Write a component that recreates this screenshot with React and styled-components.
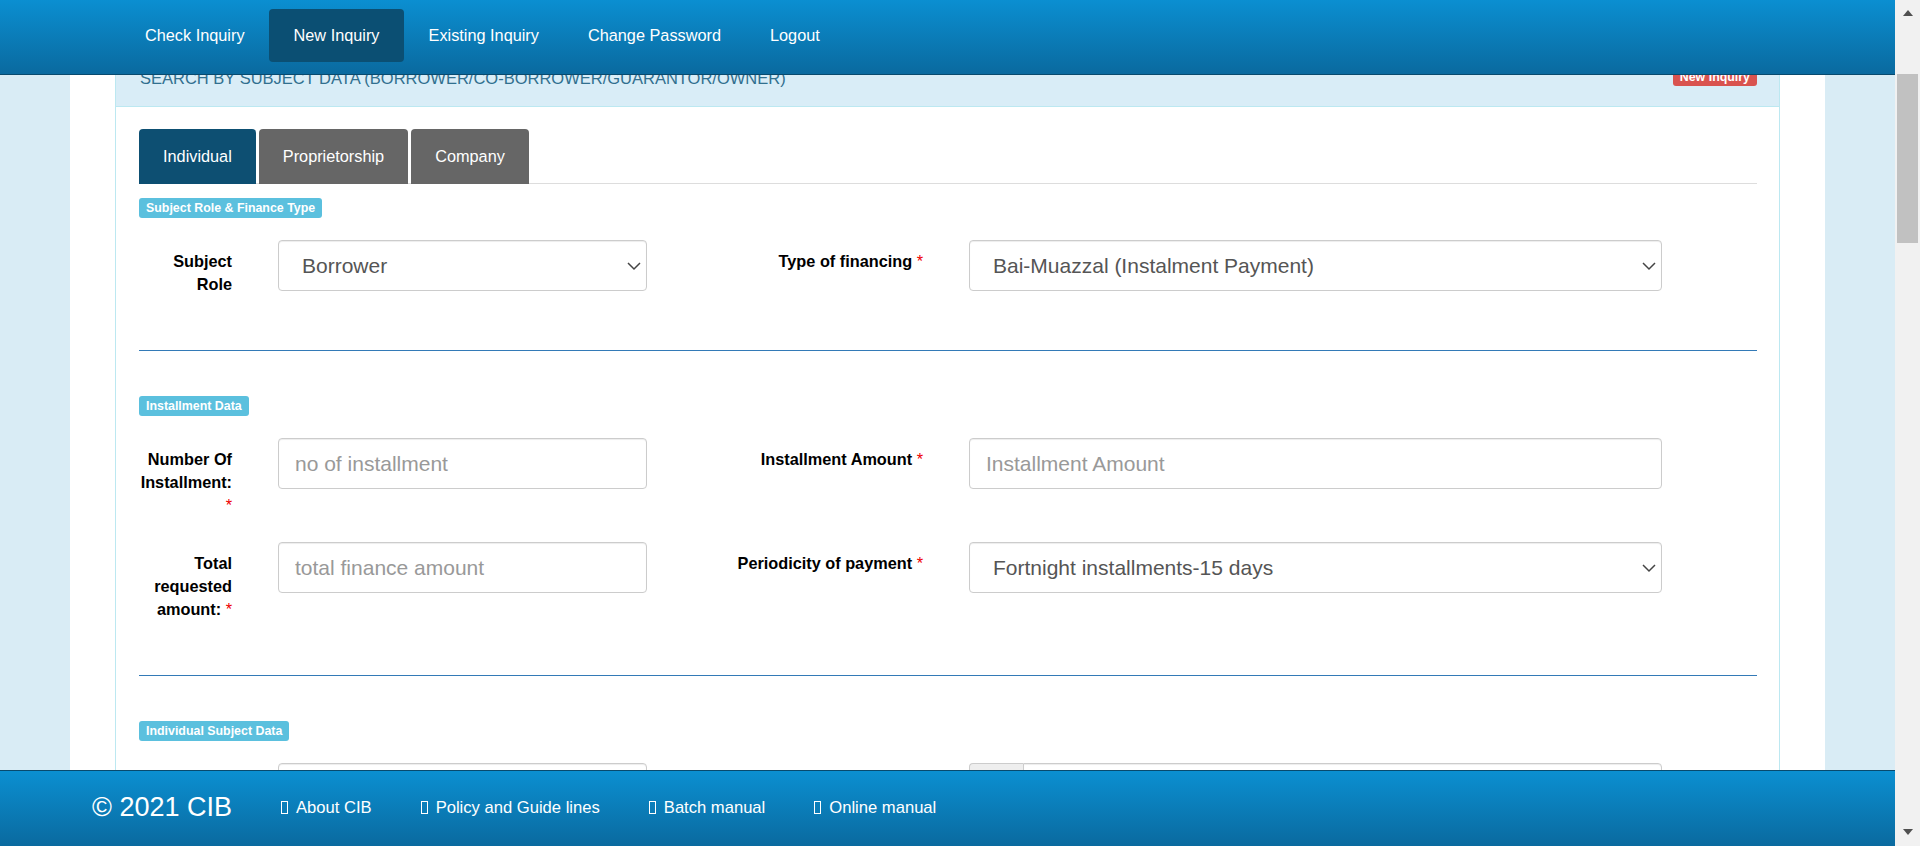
import React, { useEffect } from 'react';
import styled, { createGlobalStyle } from 'styled-components';
import { Calendar } from 'lucide-react';

//** GLOBAL **//

const GlobalStyle = createGlobalStyle`
  html {
    scrollbar-width: none;
  }
  html, body {
    margin: 0;
    padding: 0;
  }
  body {
    padding-right: 25px;
    background: #d9ecf5;
    font-family: "Liberation Sans", Arial, sans-serif;
    font-size: 16px;
    color: #333;
  }
  ::-webkit-scrollbar {
    display: none;
  }
`;

//** NAVBAR **//

const NavBar = styled.nav`
  position: fixed;
  top: 0;
  left: 0;
  right: 25px;
  z-index: 10;
  height: 75px;
  box-sizing: border-box;
  display: flex;
  align-items: flex-start;
  padding: 9px 0 0 120.5px;
  background: linear-gradient(to bottom, #0b8fd1 0%, #0a6a9f 100%);
  border-bottom: 1px solid #084a6e;
`;

const NavLink = styled.a`
  display: block;
  height: 53px;
  line-height: 53px;
  padding: 0 24.5px;
  border-radius: 4px;
  color: #fff;
  font-size: 16.3px;
  text-decoration: none;
  background: ${p => (p.$active ? '#0b4f73' : 'transparent')};
`;

//** FAKE WINDOW SCROLLBAR **//

const ScrollTrack = styled.div`
  position: fixed;
  top: 0;
  right: 0;
  bottom: 0;
  z-index: 20;
  width: 25px;
  display: flex;
  flex-direction: column;
  align-items: center;
  background: #f1f1f1;
`;

const ScrollArrow = styled.span`
  width: 0;
  height: 0;
  border-left: 5px solid transparent;
  border-right: 5px solid transparent;
  ${p =>
    p.$down
      ? 'border-top: 6px solid #505050; margin: auto 0 11px;'
      : 'border-bottom: 6px solid #505050; margin-top: 10px;'}
`;

const ScrollThumb = styled.span`
  width: 21px;
  height: 169px;
  margin-top: 58px;
  background: #c1c1c1;
`;

//** PAGE **//

const Container = styled.main`
  width: 1755px;
  min-height: 3990px;
  box-sizing: border-box;
  margin: 0 auto;
  padding: 300px 45px 0;
  background: #fff;
`;

const Panel = styled.section`
  border: 1px solid #bce8f1;
  border-radius: 4px;
`;

const PanelHeading = styled.div`
  display: flex;
  justify-content: space-between;
  align-items: flex-start;
  padding: 17px 22px 18px 24px;
  line-height: 20px;
  background: #d9edf7;
  border-bottom: 1px solid #bce8f1;
  color: #31708f;
  font-size: 16.5px;
  text-transform: uppercase;
`;

const PanelBody = styled.div`
  padding: 22px 22px 0 23px;
`;

const Label = styled.span`
  display: inline-block;
  height: ${p => (p.$big ? 18 : 20)}px;
  line-height: ${p => (p.$big ? 18 : 20)}px;
  padding: 0 7px;
  border-radius: 3px;
  color: #fff;
  font-size: 12.4px;
  font-weight: bold;
  text-transform: none;
  background: ${p => p.$color};
`;

//** TABS **//

const TabBar = styled.div`
  display: flex;
  border-bottom: 1px solid #ddd;
`;

const Tab = styled.div`
  height: 55px;
  display: flex;
  align-items: center;
  padding: 0 24px;
  margin-right: 3px;
  margin-bottom: -1px;
  border-radius: 4px 4px 0 0;
  color: #fff;
  font-size: 16.3px;
  background: ${p => (p.$active ? '#0d4f72' : '#666')};
`;

//** FORM **//

const Section = styled.div`
  padding: ${p => (p.$first ? 14 : 45)}px 0 29px;
`;

const Divider = styled.hr`
  margin: 0;
  border: 0;
  border-top: 1px solid #337ab7;
`;

const FormRow = styled.div`
  display: flex;
  align-items: flex-start;
  margin-top: ${p => (p.$first ? 22 : 0)}px;
  margin-bottom: 25px;
`;

const FieldLabel = styled.label`
  width: ${p => p.$width}px;
  flex: none;
  margin-right: 46px;
  padding-top: 10px;
  line-height: 23px;
  text-align: right;
  font-weight: bold;
  font-size: 16.3px;
  color: #000;
`;

const Req = styled.span`
  color: #e00;
  font-weight: normal;
`;

const fieldBase = `
  height: 51px;
  box-sizing: border-box;
  border: 1px solid #ccc;
  border-radius: 4px;
  box-shadow: inset 0 1px 1px rgba(0, 0, 0, 0.075);
  background-color: #fff;
  font-family: "Liberation Sans", Arial, sans-serif;
  font-size: 21px;
  color: #555;
  outline: none;
`;

const TextInput = styled.input`
  ${fieldBase}
  flex: none;
  width: ${p => p.$width}px;
  padding: 0 16px;
  &::placeholder {
    color: #999;
  }
`;

const SelectWrap = styled.div`
  position: relative;
  flex: none;
  width: ${p => p.$width}px;
`;

const Select = styled.select`
  ${fieldBase}
  width: 100%;
  padding: 0 30px 0 23px;
  appearance: none;
`;

const Chevron = styled.svg`
  position: absolute;
  right: 6px;
  top: 50%;
  transform: translateY(-50%);
  pointer-events: none;
`;

const InputGroup = styled.div`
  display: flex;
  width: ${p => p.$width}px;
  flex: none;
`;

const Addon = styled.span`
  width: 54px;
  height: 51px;
  box-sizing: border-box;
  display: flex;
  align-items: center;
  justify-content: center;
  border: 1px solid #ccc;
  border-right: 0;
  border-radius: 4px 0 0 4px;
  background: #eee;
  color: #555;
`;

const GroupInput = styled(TextInput)`
  flex: 1;
  border-radius: 0 4px 4px 0;
`;

//** FOOTER **//

const Footer = styled.footer`
  position: fixed;
  left: 0;
  right: 25px;
  bottom: 0;
  z-index: 10;
  height: 76px;
  box-sizing: border-box;
  display: flex;
  align-items: center;
  gap: 49px;
  padding: 0 0 2px 92px;
  background: linear-gradient(to bottom, #0b8fd1 0%, #0a6a9f 100%);
  border-top: 1px solid #084a6e;
  color: #fff;
`;

const Copyright = styled.span`
  font-size: 27px;
`;

const FooterLink = styled.a`
  display: flex;
  align-items: center;
  color: #fff;
  font-size: 16.6px;
  text-decoration: none;
`;

const MissingGlyph = styled.span`
  width: 7px;
  height: 13px;
  box-sizing: border-box;
  margin-right: 8px;
  border: 1px solid #fff;
`;

function DropDown({ width, value, options }) {
  return (
    <SelectWrap $width={width}>
      <Select defaultValue={value}>
        {options.map(o => (
          <option key={o}>{o}</option>
        ))}
      </Select>
      <Chevron width="14" height="9" viewBox="0 0 14 9">
        <polyline points="1,1.5 7,7.5 13,1.5" fill="none" stroke="#444" strokeWidth="1.5" />
      </Chevron>
    </SelectWrap>
  );
}

const navItems = ['Check Inquiry', 'New Inquiry', 'Existing Inquiry', 'Change Password', 'Logout'];
const footerLinks = ['About CIB', 'Policy and Guide lines', 'Batch manual', 'Online manual'];

export default function App() {
  useEffect(() => {
    window.scrollTo(0, 250);
  }, []);

  return (
    <>
      <GlobalStyle />
      <NavBar>
        {navItems.map(item => (
          <NavLink key={item} href="#" $active={item === 'New Inquiry'}>
            {item}
          </NavLink>
        ))}
      </NavBar>

      <Container>
        <Panel>
          <PanelHeading>
            <span>Search by subject data (Borrower/Co-Borrower/Guarantor/Owner)</span>
            <Label $big $color="#d9534f">New Inquiry</Label>
          </PanelHeading>
          <PanelBody>
            <TabBar>
              <Tab $active>Individual</Tab>
              <Tab>Proprietorship</Tab>
              <Tab>Company</Tab>
            </TabBar>

            <Section $first>
              <Label $color="#5bc0de">Subject Role &amp; Finance Type</Label>
              <FormRow $first>
                <FieldLabel $width={93}>Subject Role</FieldLabel>
                <DropDown
                  width={369}
                  value="Borrower"
                  options={['Borrower', 'Co-Borrower', 'Guarantor', 'Owner']}
                />
                <FieldLabel $width={276}>
                  Type of financing <Req>*</Req>
                </FieldLabel>
                <DropDown
                  width={693}
                  value="Bai-Muazzal (Instalment Payment)"
                  options={['Bai-Muazzal (Instalment Payment)', 'Murabaha', 'Ijara']}
                />
              </FormRow>
            </Section>
            <Divider />

            <Section>
              <Label $color="#5bc0de">Installment Data</Label>
              <FormRow $first>
                <FieldLabel $width={93}>
                  Number Of Installment: <Req>*</Req>
                </FieldLabel>
                <TextInput $width={369} placeholder="no of installment" />
                <FieldLabel $width={276}>
                  Installment Amount <Req>*</Req>
                </FieldLabel>
                <TextInput $width={693} placeholder="Installment Amount" />
              </FormRow>
              <FormRow>
                <FieldLabel $width={93}>
                  Total requested amount: <Req>*</Req>
                </FieldLabel>
                <TextInput $width={369} placeholder="total finance amount" />
                <FieldLabel $width={276}>
                  Periodicity of payment <Req>*</Req>
                </FieldLabel>
                <DropDown
                  width={693}
                  value="Fortnight installments-15 days"
                  options={['Monthly installments', 'Fortnight installments-15 days', 'Quarterly installments']}
                />
              </FormRow>
            </Section>
            <Divider />

            <Section>
              <Label $color="#5bc0de">Individual Subject Data</Label>
              <FormRow $first>
                <FieldLabel $width={93} />
                <TextInput $width={369} />
                <FieldLabel $width={276} />
                <InputGroup $width={693}>
                  <Addon>
                    <Calendar size={16} />
                  </Addon>
                  <GroupInput />
                </InputGroup>
              </FormRow>
            </Section>
          </PanelBody>
        </Panel>
      </Container>

      <Footer>
        <Copyright>© 2021 CIB</Copyright>
        {footerLinks.map(link => (
          <FooterLink key={link} href="#">
            <MissingGlyph />
            {link}
          </FooterLink>
        ))}
      </Footer>

      <ScrollTrack>
        <ScrollArrow />
        <ScrollThumb />
        <ScrollArrow $down />
      </ScrollTrack>
    </>
  );
}
